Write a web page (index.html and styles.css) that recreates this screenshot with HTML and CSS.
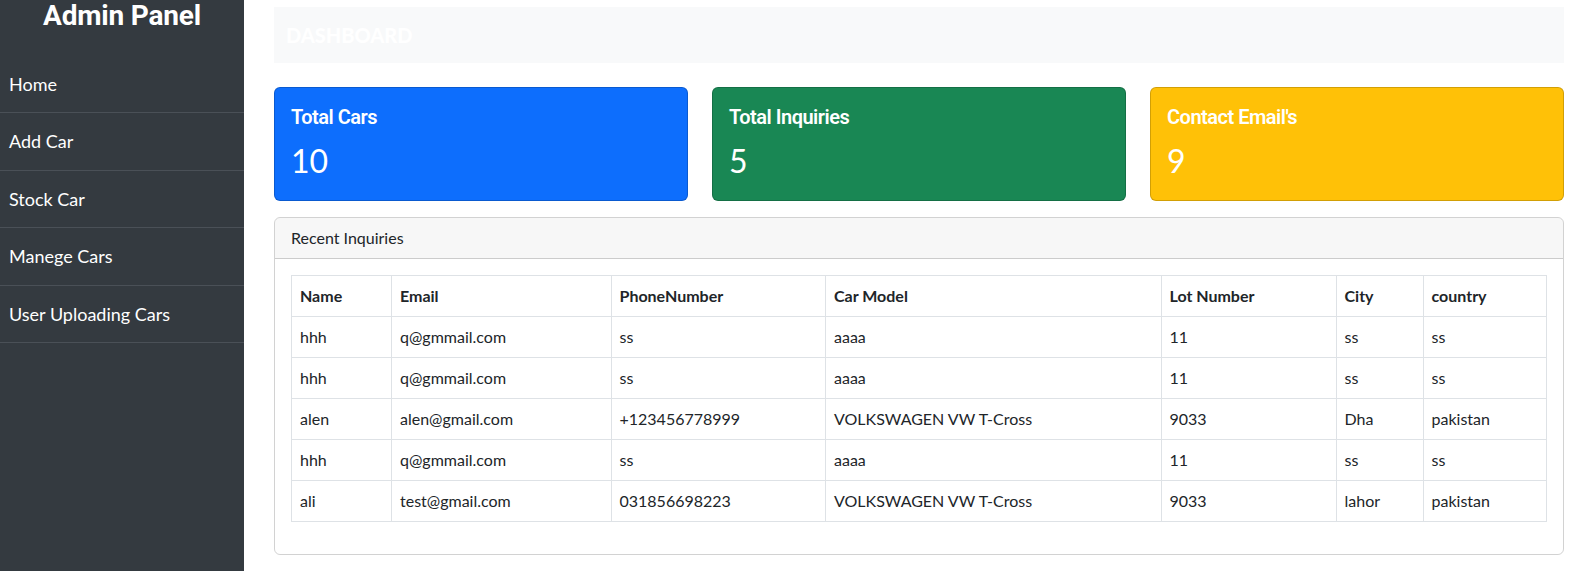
FILE: index.html
```html
<!DOCTYPE html>
<html lang="en">
<head>
<meta charset="utf-8">
<title>Admin Panel</title>
<link rel="stylesheet" href="styles.css">
</head>
<body>
<div class="layout">
  <aside class="sidebar">
    <h2 class="brand">Admin Panel</h2>
    <nav class="nav">
      <a class="nav-link" href="#">Home</a>
      <a class="nav-link" href="#">Add Car</a>
      <a class="nav-link" href="#">Stock Car</a>
      <a class="nav-link" href="#">Manege Cars</a>
      <a class="nav-link" href="#">User Uploading Cars</a>
    </nav>
  </aside>
  <main class="content">
    <div class="topbar"><span class="topbar-brand">DASHBOARD</span></div>
    <div class="stats">
      <div class="stat stat-blue">
        <h5 class="stat-title">Total Cars</h5>
        <p class="stat-value">10</p>
      </div>
      <div class="stat stat-green">
        <h5 class="stat-title">Total Inquiries</h5>
        <p class="stat-value">5</p>
      </div>
      <div class="stat stat-yellow">
        <h5 class="stat-title">Contact Email's</h5>
        <p class="stat-value">9</p>
      </div>
    </div>
    <div class="panel">
      <div class="panel-header">Recent Inquiries</div>
      <div class="panel-body">
        <table class="table">
          <colgroup>
            <col class="c-name"><col class="c-email"><col class="c-phone"><col class="c-model"><col class="c-lot"><col class="c-city"><col class="c-country">
          </colgroup>
          <thead>
            <tr><th>Name</th><th>Email</th><th>PhoneNumber</th><th>Car Model</th><th>Lot Number</th><th>City</th><th>country</th></tr>
          </thead>
          <tbody>
            <tr><td>hhh</td><td>q@gmmail.com</td><td>ss</td><td>aaaa</td><td>11</td><td>ss</td><td>ss</td></tr>
            <tr><td>hhh</td><td>q@gmmail.com</td><td>ss</td><td>aaaa</td><td>11</td><td>ss</td><td>ss</td></tr>
            <tr><td>alen</td><td>alen@gmail.com</td><td>+123456778999</td><td>VOLKSWAGEN VW T-Cross</td><td>9033</td><td>Dha</td><td>pakistan</td></tr>
            <tr><td>hhh</td><td>q@gmmail.com</td><td>ss</td><td>aaaa</td><td>11</td><td>ss</td><td>ss</td></tr>
            <tr><td>ali</td><td>test@gmail.com</td><td>031856698223</td><td>VOLKSWAGEN VW T-Cross</td><td>9033</td><td>lahor</td><td>pakistan</td></tr>
          </tbody>
        </table>
      </div>
    </div>
  </main>
</div>
</body>
</html>
```

FILE: styles.css
```css
* { box-sizing: border-box; }
html, body { margin: 0; padding: 0; }
body {
  font-family: "Lato", "Open Sans", sans-serif;
  font-size: 16px;
  line-height: 1.5;
  color: #212529;
  background: #fff;
}
.layout {
  display: flex;
  min-height: 571px;
}
.sidebar {
  width: 244px;
  flex: 0 0 244px;
  background: #343a40;
  color: #fff;
}
.brand {
  margin: 0 0 24.5px;
  padding-top: 1px;
  font-family: "Roboto", sans-serif;
  font-weight: 700;
  font-size: 28px;
  line-height: 30px;
  text-align: center;
  letter-spacing: -0.2px;
}
.nav {
  display: flex;
  flex-direction: column;
}
.nav-link {
  display: block;
  color: #fff;
  text-decoration: none;
  font-size: 18px;
  line-height: 26.5px;
  padding: 15px 9px;
  border-bottom: 1px solid #4a5057;
}
.content {
  flex: 1;
  padding: 7px 30px 0;
  min-width: 0;
}
.topbar {
  background: #f8f9fa;
  padding: 13px 12px;
  margin-bottom: 24px;
}
.topbar-brand {
  display: block;
  color: #fff;
  font-weight: 900;
  font-size: 20px;
  line-height: 30px;
}
.stats {
  display: grid;
  grid-template-columns: repeat(3, 1fr);
  gap: 24px;
}
.stat {
  color: #fff;
  border: 1px solid rgba(0,0,0,.175);
  border-radius: 6px;
  padding: 17px 16px 15px;
}
.stat-blue { background: #0d6efd; }
.stat-green { background: #198754; }
.stat-yellow { background: #ffc107; }
.stat-title {
  margin: 0 0 8px;
  font-family: "Roboto", sans-serif;
  font-weight: 600;
  font-size: 20px;
  line-height: 24px;
  letter-spacing: -0.5px;
}
.stat-value {
  margin: 0;
  font-size: 32px;
  line-height: 48px;
}
.panel {
  margin-top: 15.5px;
  border: 1px solid rgba(0,0,0,.175);
  border-radius: 6px;
}
.panel-header {
  background: rgba(0,0,0,.03);
  border-bottom: 1px solid rgba(0,0,0,.175);
  padding: 8px 16px;
  line-height: 24px;
  border-radius: 5px 5px 0 0;
}
.panel-body {
  padding: 16px;
}
.table {
  width: 100%;
  table-layout: fixed;
  border-collapse: collapse;
  margin-bottom: 16px;
}
.table th, .table td {
  border: 1px solid #dee2e6;
  padding: 8px;
  text-align: left;
  line-height: 24px;
  white-space: nowrap;
}
.table th { font-weight: 700; }
.c-name { width: 100px; }
.c-email { width: 219.5px; }
.c-phone { width: 214.5px; }
.c-model { width: 335.5px; }
.c-lot { width: 175px; }
.c-city { width: 87px; }
```
